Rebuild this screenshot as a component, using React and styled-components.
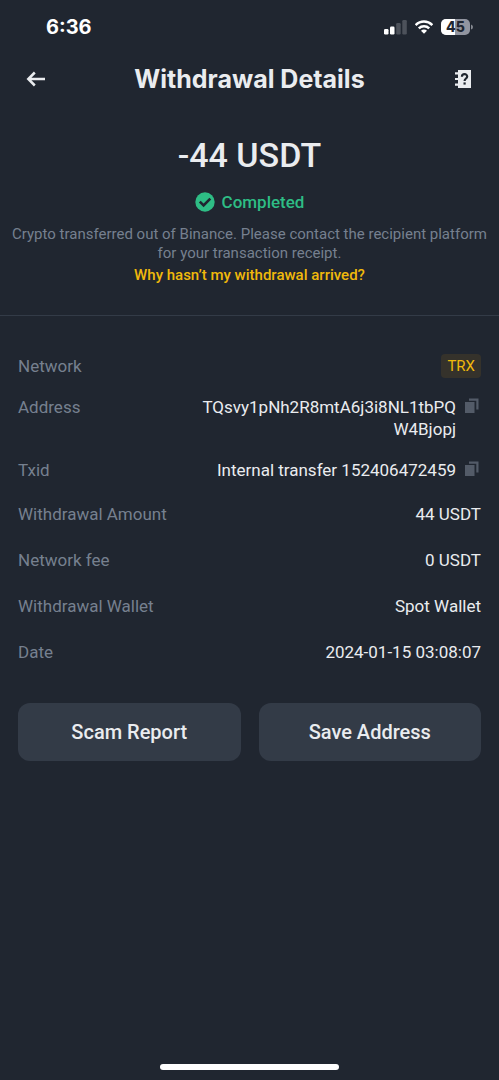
import React from "react";
import styled, { createGlobalStyle } from "styled-components";

const GlobalStyle = createGlobalStyle`
  *, *::before, *::after { box-sizing: border-box; }
  body {
    margin: 0;
    background: #202630;
    color: #eaecef;
    font-family: Roboto, "Noto Sans", sans-serif;
    font-size: 17px;
    line-height: 22px;
  }
  button { font: inherit; color: inherit; border: 0; padding: 0; background: none; cursor: pointer; }
  svg { display: block; }
`;

const Screen = styled.div`
  display: flex;
  flex-direction: column;
  min-height: 100vh;
`;

const StatusBar = styled.div`
  display: flex;
  align-items: center;
  justify-content: space-between;
  height: 54px;
  padding: 0 26px 0 46px;
  color: #fff;
`;

const Clock = styled.time`
  font-family: Inter, sans-serif;
  font-size: 20px;
  line-height: 24px;
  font-weight: 700;
`;

const StatusIcons = styled.div`
  display: flex;
  align-items: center;
  gap: 8px;
`;

const Header = styled.header`
  display: grid;
  grid-template-columns: 36px 1fr 36px;
  align-items: center;
  height: 50px;
  padding: 0 18px;
`;

const Title = styled.h1`
  margin: 0;
  font-family: Inter, sans-serif;
  font-size: 25px;
  line-height: 30px;
  font-weight: 700;
  text-align: center;
`;

const IconButton = styled.button`
  display: grid;
  place-items: center;
  width: 36px;
  height: 36px;
`;

const Summary = styled.section`
  display: flex;
  flex-direction: column;
  align-items: center;
  padding: 30px 10px 29px;
  border-bottom: 1px solid #333b47;
  text-align: center;
`;

const Amount = styled.div`
  font-size: 34px;
  line-height: 42px;
  font-weight: 500;
`;

const Status = styled.div`
  display: flex;
  align-items: center;
  gap: 7px;
  margin-top: 15px;
  color: #2ebd85;
  font-weight: 500;
`;

const Note = styled.p`
  margin: 12px 0 0;
  color: #76808f;
  font-size: 15px;
  line-height: 19px;
`;

const HelpLink = styled.a`
  margin-top: 1px;
  color: #f0b90b;
  font-size: 15px;
  font-weight: 500;
  text-decoration: none;
`;

const Details = styled.dl`
  display: flex;
  flex-direction: column;
  gap: ${(p) => p.$gap}px;
  margin: 0;
  padding: ${(p) => p.$top}px 18px 0;
`;

const Row = styled.div`
  display: flex;
  justify-content: space-between;
  gap: 16px;
`;

const Label = styled.dt`
  flex: none;
  color: #76808f;
`;

const Value = styled.dd`
  display: flex;
  align-items: flex-start;
  gap: 7px;
  margin: 0;
  text-align: right;
`;

const Hash = styled.span`
  max-width: 256px;
  overflow-wrap: anywhere;
`;

const Tag = styled.span`
  margin: -1px 0;
  padding: 0 6px;
  border-radius: 4px;
  background: #35322b;
  color: #f0b90b;
  font-size: 15px;
  line-height: 24px;
`;

const CopyButton = styled.button`
  padding: 2px;
`;

const Actions = styled.div`
  display: grid;
  grid-template-columns: 1fr 1fr;
  gap: 18px;
  padding: 40px 18px;
`;

const ActionButton = styled.button`
  && {
    height: 58px;
    border-radius: 12px;
    background: #333b47;
    font-size: 20px;
    font-weight: 500;
  }
`;

const HomeIndicator = styled.div`
  width: 36%;
  height: 6px;
  margin: auto auto 10px;
  border-radius: 3px;
  background: #fff;
`;

const BatteryText = styled.text`
  font-family: Inter, sans-serif;
  font-size: 14px;
  font-weight: 800;
  fill: #202630;
`;

const SignalIcon = () => (
  <svg width="23" height="16" viewBox="0 0 23 16" aria-hidden="true">
    <rect x="0" y="10" width="4.5" height="5.5" rx="1.2" fill="#fff" />
    <rect x="6" y="7.5" width="4.5" height="8" rx="1.2" fill="#fff" />
    <rect x="12.2" y="4" width="4.5" height="11.5" rx="1.2" fill="#4d525b" />
    <rect x="18.3" y="1" width="4.5" height="14.5" rx="1.2" fill="#4d525b" />
  </svg>
);

const WifiIcon = () => (
  <svg width="18" height="16" viewBox="0.5 0.5 19 15" aria-hidden="true">
    <g fill="none" stroke="#fff" strokeWidth="2.6">
      <path d="M1.2 6C6.2 1 13.8 1 18.8 6" />
      <path d="M4.5 9.4C7.6 6.4 12.4 6.4 15.5 9.4" />
    </g>
    <path d="M10 15.2 6.8 12C8.6 10.3 11.4 10.3 13.2 12Z" fill="#fff" />
  </svg>
);

const BatteryIcon = () => (
  <svg width="32" height="16" viewBox="0 0 32 16" role="img" aria-label="Battery 45 percent">
    <rect width="29" height="16" rx="5" fill="#9295a0" />
    <path d="M5 0H14V16H5A5 5 0 0 1 0 11V5A5 5 0 0 1 5 0Z" fill="#fff" />
    <path d="M30 5.5Q32 6 32 8T30 10.5Z" fill="#858991" />
    <BatteryText x="14.5" y="13" textAnchor="middle">45</BatteryText>
  </svg>
);

const BackIcon = () => (
  <svg width="20" height="16" viewBox="0 0 20 16" fill="none" stroke="#eaecef" strokeWidth="2.5" aria-hidden="true">
    <path d="M19 8H2.5M8.8 1.5 2.3 8l6.5 6.5" />
  </svg>
);

const GuideIcon = () => (
  <svg width="18" height="20" viewBox="0 0 18 20" aria-hidden="true">
    <path d="M4 1H17V19H4V16.8H1V14.6H4V11.1H1V8.9H4V5.4H1V3.2H4Z" fill="#eaecef" />
    <path d="M7.9 7.7C8 4.4 13.2 4.4 13.2 7.5C13.2 9.5 10.6 9.5 10.6 12" fill="none" stroke="#202630" strokeWidth="2.2" />
    <rect x="9.5" y="13.4" width="2.2" height="2.2" fill="#202630" />
  </svg>
);

const CheckIcon = () => (
  <svg width="20" height="20" viewBox="0 0 20 20" aria-hidden="true">
    <circle cx="10" cy="10" r="9.7" fill="#2ebd85" />
    <path d="m4.8 9.7 3.8 3.8 6.7-6.8" fill="none" stroke="#202630" strokeWidth="2.6" />
  </svg>
);

const CopyIcon = () => (
  <svg width="14" height="16" viewBox="0 0 14 16" fill="#535b68" aria-hidden="true">
    <path d="M0 4H9.5V15H0Z" />
    <path d="M4 .5H13.5V11.5H11.3V2.7H4Z" />
  </svg>
);

const Field = ({ label, copy, children }) => (
  <Row>
    <Label>{label}</Label>
    <Value>
      {children}
      {copy && (
        <CopyButton type="button" aria-label={`Copy ${label}`}>
          <CopyIcon />
        </CopyButton>
      )}
    </Value>
  </Row>
);

export default function App() {
  return (
    <>
      <GlobalStyle />
      <Screen>
        <StatusBar>
          <Clock>6:36</Clock>
          <StatusIcons>
            <SignalIcon />
            <WifiIcon />
            <BatteryIcon />
          </StatusIcons>
        </StatusBar>
        <Header>
          <IconButton type="button" aria-label="Back"><BackIcon /></IconButton>
          <Title>Withdrawal Details</Title>
          <IconButton type="button" aria-label="Help"><GuideIcon /></IconButton>
        </Header>
        <main>
          <Summary>
            <Amount>-44 USDT</Amount>
            <Status><CheckIcon />Completed</Status>
            <Note>
              Crypto transferred out of Binance. Please contact the recipient platform for your transaction receipt.
            </Note>
            <HelpLink href="#help">Why hasn’t my withdrawal arrived?</HelpLink>
          </Summary>
          <Details $gap={19} $top={39}>
            <Field label="Network"><Tag>TRX</Tag></Field>
            <Field label="Address" copy><Hash>TQsvy1pNh2R8mtA6j3i8NL1tbPQW4Bjopj</Hash></Field>
            <Field label="Txid" copy>Internal transfer 152406472459</Field>
          </Details>
          <Details $gap={24} $top={22}>
            <Field label="Withdrawal Amount">44 USDT</Field>
            <Field label="Network fee">0 USDT</Field>
            <Field label="Withdrawal Wallet">Spot Wallet</Field>
            <Field label="Date">2024-01-15 03:08:07</Field>
          </Details>
          <Actions>
            <ActionButton type="button">Scam Report</ActionButton>
            <ActionButton type="button">Save Address</ActionButton>
          </Actions>
        </main>
        <HomeIndicator />
      </Screen>
    </>
  );
}
